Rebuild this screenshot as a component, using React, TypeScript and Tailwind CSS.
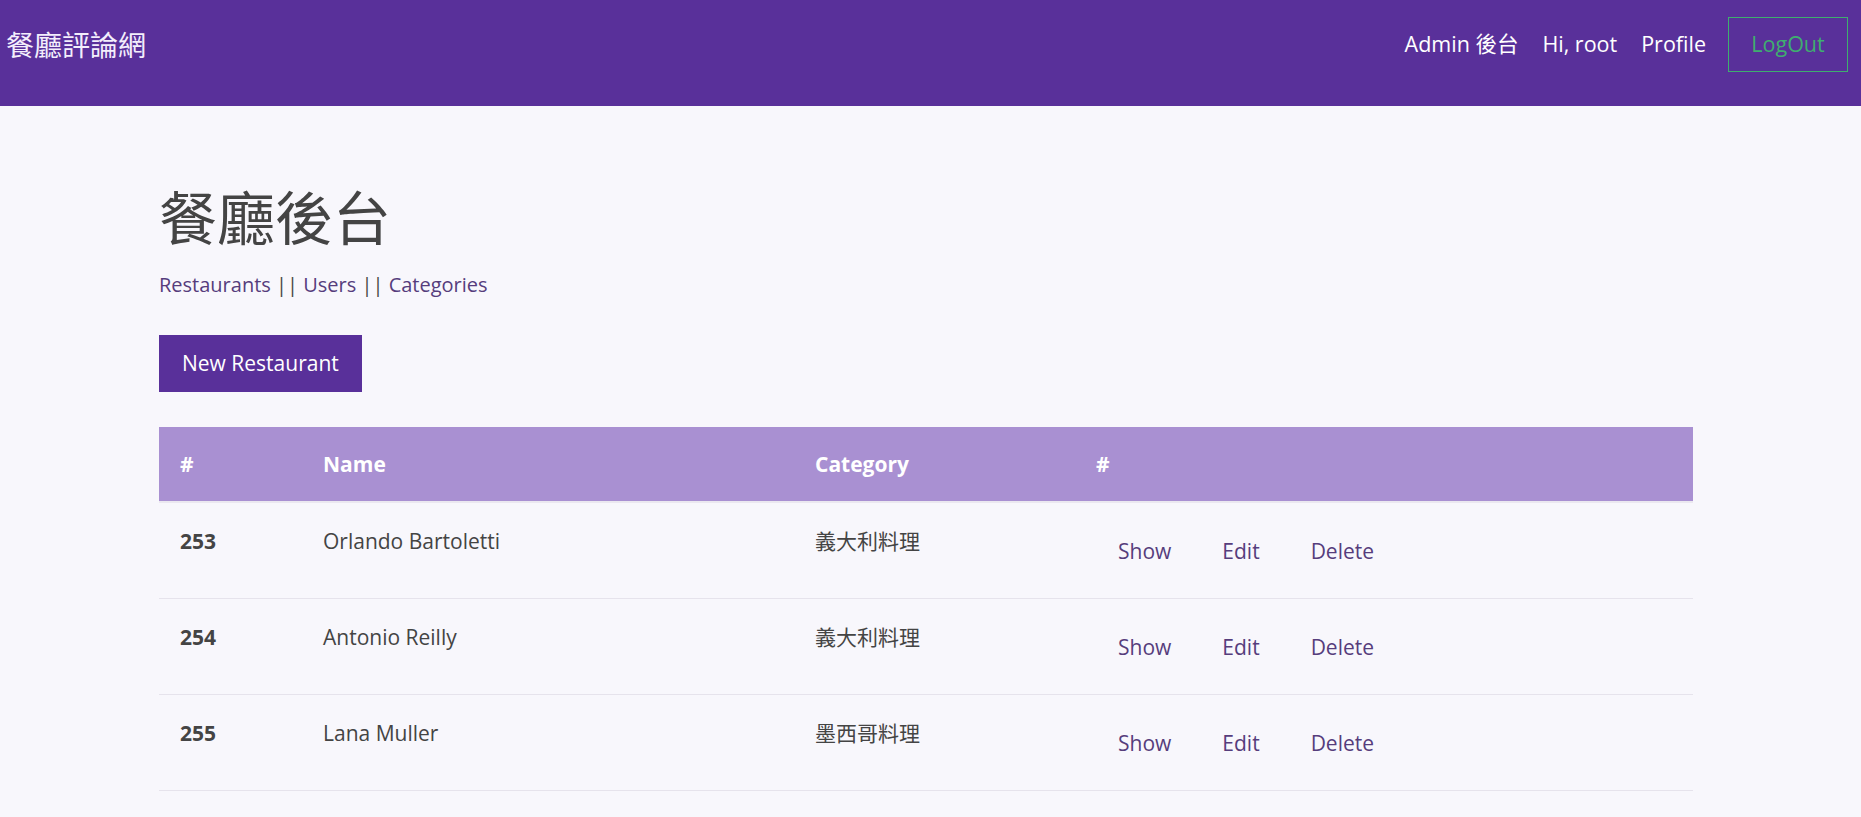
const restaurants = [
  { id: 253, name: "Orlando Bartoletti", category: "義大利料理" },
  { id: 254, name: "Antonio Reilly", category: "義大利料理" },
  { id: 255, name: "Lana Muller", category: "墨西哥料理" },
];

const font = { fontFamily: '"Open Sans", "Noto Sans CJK TC", sans-serif' };

export default function App() {
  return (
    <div className="min-h-screen bg-[#f8f7fc] text-[#444]" style={font}>
      {/* Navbar */}
      <nav className="h-[106px] bg-[#59309a] pt-[17px] pl-[6px] pr-[13px]">
        <div className="flex items-center justify-between h-[55px]">
          <a href="#" className="text-[28px] text-[#f3eefc] leading-none">
            餐廳評論網
          </a>
          <div className="flex items-center text-[21.5px] text-white">
            <a href="#" className="mr-[24px]">Admin 後台</a>
            <a href="#" className="mr-[24px]">Hi, root</a>
            <a href="#" className="mr-[22px]">Profile</a>
            <button className="w-[120px] h-[55px] border border-[#3fae6f] text-[#3fae6f] text-[21.5px]">
              LogOut
            </button>
          </div>
        </div>
      </nav>

      {/* Main */}
      <main className="pl-[159px] pr-[168px] pt-[77px]">
        <h1 className="text-[58px] leading-[69px] text-[#444]">餐廳後台</h1>
        <div className="mt-[17px] text-[20px] leading-[32px]">
          <a href="#" className="text-[#563d7c]">Restaurants</a>
          <span> || </span>
          <a href="#" className="text-[#563d7c]">Users</a>
          <span> || </span>
          <a href="#" className="text-[#563d7c]">Categories</a>
        </div>

        <button className="mt-[34px] h-[57px] px-[23px] bg-[#59309a] text-white text-[21px]">
          New Restaurant
        </button>

        <table className="mt-[35px] w-full text-[21px] leading-[32px] border-collapse">
          <thead>
            <tr className="bg-[#a990d2] text-white font-bold border-b-2 border-[#ebe8f0]">
              <th className="w-[143px] text-left px-[21px] py-[21px]">#</th>
              <th className="w-[492px] text-left px-[21px] py-[21px]">Name</th>
              <th className="w-[281px] text-left px-[21px] py-[21px]">Category</th>
              <th className="text-left px-[21px] py-[21px]">#</th>
            </tr>
          </thead>
          <tbody>
            {restaurants.map((r) => (
              <tr key={r.id} className="border-b border-[#e6e3ec] align-top">
                <td className="px-[21px] pt-[22px] font-bold">{r.id}</td>
                <td className="px-[21px] pt-[22px]">{r.name}</td>
                <td className="px-[21px] pt-[22px]">{r.category}</td>
                <td className="pl-[43px] pt-[24px] pb-[23px]">
                  <div className="flex items-center text-[#563d7c]">
                    <a href="#" className="py-[8px]">Show</a>
                    <a href="#" className="py-[8px] ml-[51px]">Edit</a>
                    <a href="#" className="py-[8px] ml-[51px]">Delete</a>
                  </div>
                </td>
              </tr>
            ))}
          </tbody>
        </table>
      </main>
    </div>
  );
}
